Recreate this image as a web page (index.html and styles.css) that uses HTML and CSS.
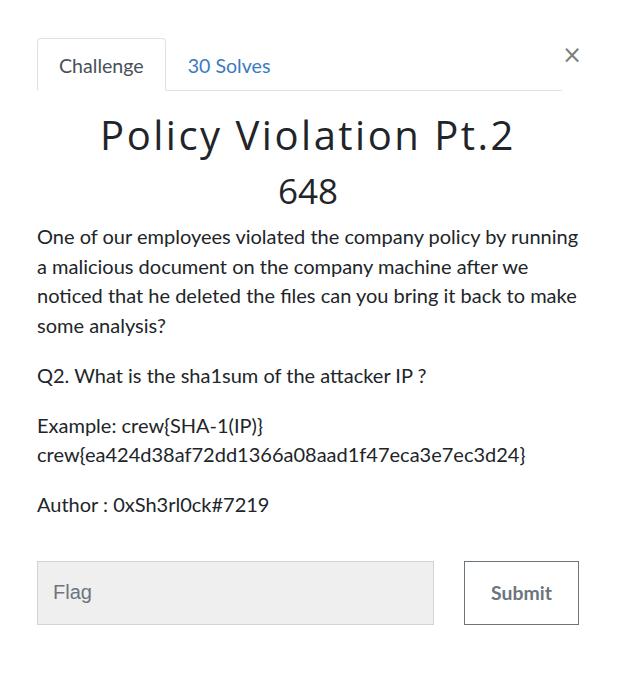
FILE: index.html
```html
<!DOCTYPE html>
<html>
<head>
<meta charset="utf-8">
<link rel="stylesheet" href="styles.css">
</head>
<body>
<div class="modal">
  <div class="top">
    <ul class="tabs">
      <li class="tab active">Challenge</li>
      <li class="tab">30 Solves</li>
    </ul>
    <span class="close">×</span>
  </div>
  <h2 class="title">Policy Violation Pt.2</h2>
  <h3 class="value">648</h3>
  <div class="desc">
    <p>One of our employees violated the company policy by running a malicious document on the company machine after we noticed that he deleted the files can you bring it back to make some analysis?</p>
    <p>Q2. What is the sha1sum of the attacker IP ?</p>
    <p>Example: crew{SHA-1(IP)}<br>crew{ea424d38af72dd1366a08aad1f47eca3e7ec3d24}</p>
    <p>Author : 0xSh3rl0ck#7219</p>
  </div>
  <div class="form">
    <input class="flag" type="text" placeholder="Flag">
    <button class="submit">Submit</button>
  </div>
</div>
</body>
</html>
```
FILE: styles.css
```css
html, body { margin: 0; padding: 0; background: #fff; }
body { font-family: Lato, "Noto Sans", sans-serif; color: #212529; }
.modal { padding: 38px 38px 0 37px; }
.top { display: flex; align-items: flex-start; }
.tabs { list-style: none; margin: 0; padding: 0; display: flex; border-bottom: 1px solid #dee2e6; width: 525px; flex-shrink: 0; }
.tab { font-size: 19.6px; padding: 15px 21px 12px; color: #3a7bbf; border: 1px solid transparent; border-radius: 4px 4px 0 0; margin-bottom: -1px; line-height: 24px; }
.tab.active { color: #495057; background: #fff; border-color: #dee2e6 #dee2e6 #fff; }
.close { font-family: "DejaVu Sans", sans-serif; font-size: 24px; color: #808080; margin-left: auto; margin-top: 2px; margin-right: 3px; line-height: 30px; font-weight: normal; }
.title { font-family: "Open Sans", sans-serif; font-weight: 400; font-size: 40px; letter-spacing: 2.5px; text-align: center; margin: 17px 0 0; line-height: 54px; color: #212529; }
.value { font-family: "Open Sans", sans-serif; font-weight: 400; font-size: 35px; text-align: center; margin: 5px 0 0; line-height: 48px; }
.desc { font-size: 20px; line-height: 29.7px; margin-top: 7px; }
.desc p { margin: 0 0 20px; }
.form { display: flex; justify-content: space-between; margin-top: 41px; }
.flag { width: 397px; height: 64px; box-sizing: border-box; background: #efefef; border: 1px solid #ced4da; font-family: "Liberation Sans", Arial, sans-serif; font-size: 20px; padding: 0 15px; color: #495057; }
.flag::placeholder { color: #6c757d; }
.submit { width: 115px; height: 64px; background: #fff; border: 1px solid #6c757d; font-family: Lato, sans-serif; font-weight: bold; font-size: 19.4px; color: #6c757d; }
```
